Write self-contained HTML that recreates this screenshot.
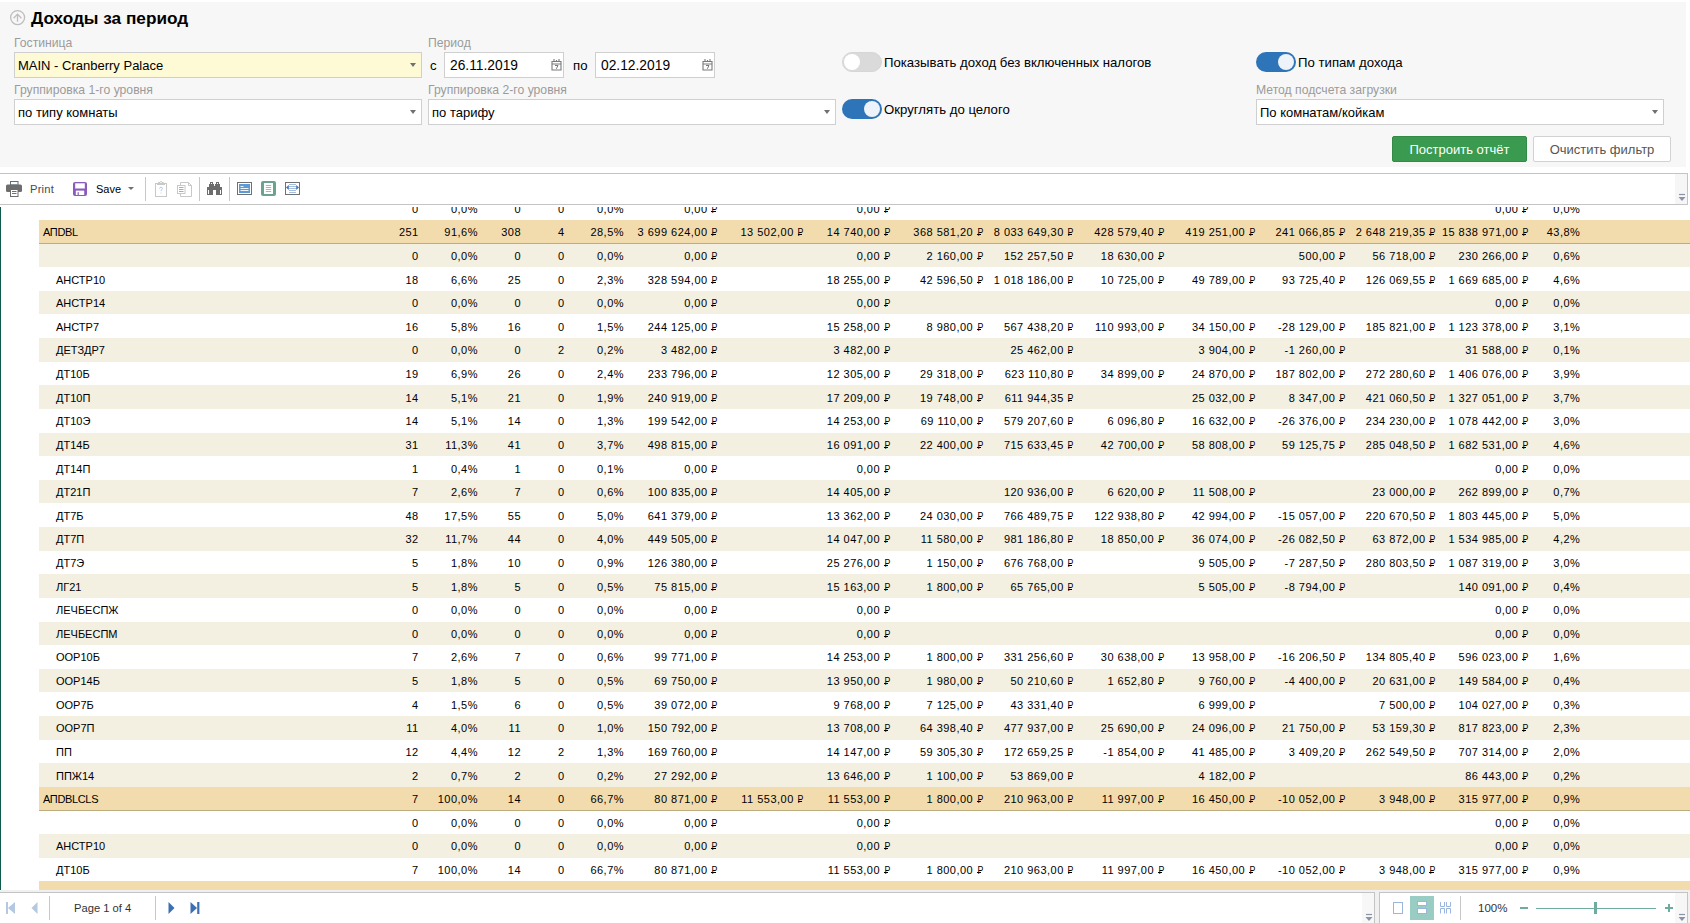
<!DOCTYPE html>
<html><head><meta charset="utf-8">
<style>
*{box-sizing:border-box}
html,body{margin:0;padding:0}
body{width:1690px;height:923px;overflow:hidden;position:relative;background:#fff;font-family:"Liberation Sans",sans-serif;color:#000}
.a{position:absolute}
#panel{position:absolute;left:0;top:2px;width:1686px;height:165px;background:#f7f7f7}
.lbl{position:absolute;font-size:12.2px;color:#9b9b9b;line-height:14px;white-space:nowrap}
.inp{position:absolute;height:26px;border:1px solid #cfcfcf;background:#fff;font-size:13px;line-height:26px;padding-left:3px;white-space:nowrap}
.arr{position:absolute;right:5px;top:10px;width:0;height:0;border-left:3px solid transparent;border-right:3px solid transparent;border-top:4px solid #707070}
.tg{position:absolute;width:40px;height:20px;border-radius:10px}
.tg.off{background:#dadada;border:1px solid #d6d6d6}
.tg.on{background:#2e74b8}
.tg .k{position:absolute;top:2px;width:16px;height:16px;border-radius:50%}
.tg.off .k{left:1px;top:1px;background:#fff}
.tg.on .k{left:22px;background:#eef3f9}
.tl{position:absolute;font-size:13.2px;line-height:16px;white-space:nowrap;margin-top:1px}
.btn{position:absolute;height:26px;font-size:13px;line-height:26px;text-align:center;border-radius:2px;white-space:nowrap}
#tb{position:absolute;left:0;top:173px;width:1688px;height:32px;border-top:1px solid #c4c4c4;border-bottom:1px solid #c4c4c4;border-right:1px solid #c4c4c4;background:#fff}
.sep{position:absolute;top:4px;width:1px;height:24px;background:#c8c8c8}
#tbl{position:absolute;left:0;top:207px;width:1690px;height:683px;overflow:hidden}
.tr{position:absolute;left:39px;right:0;font-size:11px;letter-spacing:0.48px;white-space:nowrap}
.tr s{position:absolute;text-decoration:none;top:0;line-height:24px}
.tr s.n{letter-spacing:0;top:0}
.o1 s{margin-top:1px}
.om1 s{margin-top:-1px}
.g{background:#f2dcae;border-bottom:1px solid #bcad80}
.b{background:#f3efe1}
.w{background:#fff}
.r{display:inline-block;position:relative;width:6.5px;margin-left:-1px;letter-spacing:0;font-weight:normal}
.r::before{content:"Р";display:inline-block;transform:scaleX(.8);transform-origin:100% 50%}
.r::after{content:"";position:absolute;left:1.2px;width:4.3px;top:14px;height:1px;background:#000}
#sb{position:absolute;left:0;top:890px;width:1690px;height:33px;background:#f0f0f0}
</style></head><body>
<div id="panel"></div>
<!-- title -->
<svg class="a" style="left:9px;top:9px" width="18" height="18" viewBox="0 0 18 18"><circle cx="8.6" cy="8.6" r="7" fill="none" stroke="#bdbdbd" stroke-width="1.3"/><path d="M8.5 12.8V4.8M4.6 9.2L8.5 5.1L12.4 9.2" fill="none" stroke="#bdbdbd" stroke-width="1.3"/></svg>
<div class="a" style="left:31px;top:8px;font-size:17.2px;font-weight:bold;line-height:20px;white-space:nowrap">Доходы за период</div>

<div class="lbl" style="left:14px;top:36px">Гостиница</div>
<div class="inp" style="left:14px;top:52px;width:408px;background:#fffad6">MAIN - Cranberry Palace<i class="arr"></i></div>
<div class="lbl" style="left:14px;top:83px">Группировка 1-го уровня</div>
<div class="inp" style="left:14px;top:99px;width:408px">по типу комнаты<i class="arr"></i></div>

<div class="lbl" style="left:428px;top:36px">Период</div>
<div class="tl" style="left:430px;top:57px">с</div>
<div class="inp" style="left:444px;top:52px;width:120px;padding-left:5px;font-size:13.8px;line-height:26px">26.11.2019<svg class="a" style="left:106px;top:5px" width="11" height="13" viewBox="0 0 11 13"><path d="M1 3.5H10V12H1Z M1 6H10" fill="none" stroke="#7a7a7a" stroke-width="1.1"/><path d="M3 1V4M8 1V4M5.5 2V4" stroke="#7a7a7a" stroke-width="1.1"/><path d="M4 7.5H7L5.3 10.8" fill="none" stroke="#7a7a7a" stroke-width="1"/></svg></div>
<div class="tl" style="left:573px;top:57px">по</div>
<div class="inp" style="left:595px;top:52px;width:120px;padding-left:5px;font-size:13.8px;line-height:26px">02.12.2019<svg class="a" style="left:106px;top:5px" width="11" height="13" viewBox="0 0 11 13"><path d="M1 3.5H10V12H1Z M1 6H10" fill="none" stroke="#7a7a7a" stroke-width="1.1"/><path d="M3 1V4M8 1V4M5.5 2V4" stroke="#7a7a7a" stroke-width="1.1"/><path d="M4 7.5H7L5.3 10.8" fill="none" stroke="#7a7a7a" stroke-width="1"/></svg></div>
<div class="lbl" style="left:428px;top:83px">Группировка 2-го уровня</div>
<div class="inp" style="left:428px;top:99px;width:408px">по тарифу<i class="arr"></i></div>

<div class="tg off" style="left:842px;top:52px"><i class="k"></i></div>
<div class="tl" style="left:884px;top:54px">Показывать доход без включенных налогов</div>
<div class="tg on" style="left:842px;top:99px"><i class="k"></i></div>
<div class="tl" style="left:884px;top:101px">Округлять до целого</div>

<div class="tg on" style="left:1256px;top:52px"><i class="k"></i></div>
<div class="tl" style="left:1298px;top:54px">По типам дохода</div>
<div class="lbl" style="left:1256px;top:83px">Метод подсчета загрузки</div>
<div class="inp" style="left:1256px;top:99px;width:408px">По комнатам/койкам<i class="arr"></i></div>

<div class="btn" style="left:1392px;top:136px;width:135px;background:#3a9a4f;border:1px solid #338a47;color:#fff">Построить отчёт</div>
<div class="btn" style="left:1533px;top:136px;width:138px;background:#fff;border:1px solid #d2d2d2;color:#555">Очистить фильтр</div>

<!-- toolbar -->
<div id="tb">
<svg class="a" style="left:5px;top:6px" width="18" height="17" viewBox="0 0 18 17"><rect x="5.5" y="1.5" width="7.5" height="5" fill="#fff" stroke="#6d6d6d"/><line x1="6" y1="5" x2="12.5" y2="5" stroke="#3b7ac4"/><rect x="1" y="4.5" width="16" height="7.5" rx="1.5" fill="#6d6d6d"/><rect x="5.5" y="9.5" width="7.5" height="7" fill="#fff" stroke="#6d6d6d"/><line x1="7" y1="11.5" x2="11.5" y2="11.5" stroke="#3b7ac4"/><line x1="7" y1="13.5" x2="11.5" y2="13.5" stroke="#3b7ac4"/></svg>
<div class="a" style="left:30px;top:9px;font-size:11.2px;line-height:13px;color:#4a4a4a;letter-spacing:0.2px">Print</div>
<svg class="a" style="left:73px;top:8px" width="14" height="14" viewBox="0 0 14 14"><rect x="0" y="0" width="14" height="14" rx="2" fill="#8a5bbd"/><rect x="2.2" y="1.3" width="9.6" height="5.2" fill="#fff"/><rect x="2.8" y="8.6" width="8.4" height="4.4" fill="#fff"/><rect x="4.6" y="10.2" width="1.2" height="3" fill="#8a5bbd"/></svg>
<div class="a" style="left:96px;top:9px;font-size:11px;line-height:13px;color:#000">Save</div>
<i class="a" style="left:128px;top:13px;width:0;height:0;border-left:3px solid transparent;border-right:3px solid transparent;border-top:3px solid #707070"></i>
<i class="sep" style="left:145px;top:3px"></i>
<svg class="a" style="left:155px;top:6px" width="13" height="18" viewBox="0 0 13 18"><rect x="0.5" y="3.5" width="11" height="13" fill="#fff" stroke="#c8c8c8"/><path d="M3.5 3.5V2.5H5A1 1 0 0 1 7 2.5H8.5V3.5" fill="none" stroke="#c8c8c8"/><rect x="2" y="3" width="8" height="2" fill="#c8c8c8"/><path d="M4.6 8.6Q4.6 7.2 6 7.2Q7.4 7.2 7.4 8.5Q7.4 9.4 6.1 10.2V11.2M6 12.6V13.4" fill="none" stroke="#a9c4e8" stroke-width="0.9"/></svg>
<svg class="a" style="left:177px;top:8px" width="16" height="16" viewBox="0 0 16 16"><path d="M3.5 0.5H11.5L14.5 3.5V14.5H3.5Z" fill="#fff" stroke="#c8c8c8"/><path d="M11.5 0.5V3.5H14.5" fill="none" stroke="#c8c8c8"/><rect x="0.5" y="3.5" width="7.5" height="8" fill="#fff" stroke="#c8c8c8"/><path d="M2 5.5H6.5M2 7.5H6.5M2 9.5H6.5" stroke="#8fb3e0"/></svg>
<i class="sep" style="left:199px;top:3px"></i>
<svg class="a" style="left:207px;top:8px" width="15" height="13" viewBox="0 0 15 13" shape-rendering="crispEdges"><g fill="#6d6d6d"><rect x="3" y="0" width="3" height="2"/><rect x="2" y="2" width="5" height="3"/><rect x="0" y="5" width="6" height="8"/><rect x="9" y="0" width="3" height="2"/><rect x="8" y="2" width="5" height="3"/><rect x="9" y="5" width="6" height="8"/><rect x="6" y="4" width="3" height="4"/></g><g fill="#fff"><rect x="1" y="8" width="1" height="4"/><rect x="13" y="8" width="1" height="4"/><rect x="4" y="1" width="1" height="1"/><rect x="10" y="1" width="1" height="1"/></g></svg>
<i class="sep" style="left:229px;top:3px"></i>
<svg class="a" style="left:237px;top:8px" width="15" height="13" viewBox="0 0 15 13"><rect x="0.5" y="0.5" width="14" height="12" fill="#fff" stroke="#707070"/><rect x="2" y="2" width="11" height="9" fill="#5b9bd8"/><line x1="3.5" y1="4.5" x2="6.5" y2="4.5" stroke="#fff" stroke-width="0.9"/><line x1="3.5" y1="6.5" x2="11.5" y2="6.5" stroke="#fff" stroke-width="0.9"/><line x1="3.5" y1="8.5" x2="11.5" y2="8.5" stroke="#fff" stroke-width="0.9"/></svg>
<svg class="a" style="left:261px;top:7px" width="15" height="15" viewBox="0 0 15 15"><rect x="0" y="0" width="15" height="15" rx="2" fill="#6ba38f"/><rect x="3" y="2" width="9" height="11" fill="#fff"/><line x1="4.8" y1="4.5" x2="10.2" y2="4.5" stroke="#8eadd6" stroke-width="0.9"/><line x1="4.8" y1="6.5" x2="10.2" y2="6.5" stroke="#8eadd6" stroke-width="0.9"/><line x1="4.8" y1="8.5" x2="10.2" y2="8.5" stroke="#8eadd6" stroke-width="0.9"/><line x1="4.8" y1="10.5" x2="10.2" y2="10.5" stroke="#8eadd6" stroke-width="0.9"/></svg>
<svg class="a" style="left:285px;top:8px" width="15" height="13" viewBox="0 0 15 13"><rect x="0.5" y="0.5" width="14" height="12" fill="#fff" stroke="#707070"/><line x1="4" y1="2.5" x2="11" y2="2.5" stroke="#8eadd6" stroke-width="0.8"/><line x1="4" y1="4.5" x2="11" y2="4.5" stroke="#8eadd6" stroke-width="0.8"/><line x1="4" y1="6.5" x2="11" y2="6.5" stroke="#8eadd6" stroke-width="0.8"/><line x1="4" y1="8.5" x2="11" y2="8.5" stroke="#8eadd6" stroke-width="0.8"/><line x1="4" y1="10.5" x2="11" y2="10.5" stroke="#8eadd6" stroke-width="0.8"/><path d="M1 5.5L3.8 3V8Z M14 5.5L11.2 3V8Z" fill="#3d75bd"/></svg>
<div class="a" style="left:1675px;top:0;width:12px;height:30px;background:#f6f6f6"></div>
<svg class="a" style="left:1678px;top:19px" width="8" height="9" viewBox="0 0 8 9"><line x1="1" y1="1.5" x2="7" y2="1.5" stroke="#8a94a6" stroke-width="1.2"/><path d="M0.5 4H7.5L4 8Z" fill="#8a94a6"/></svg>
</div>

<div id="tbl">
<i class="a" style="left:0;top:0;width:1px;height:683px;background:#0f5a4f"></i>
<div style="position:absolute;left:0;top:-207px;width:1690px;height:1100px">
<div class="tr w o1" style="top:196px;height:24px"><s style="right:1271.3px">0</s><s style="right:1212.1px">0,0%</s><s style="right:1169.0px">0</s><s style="right:1125.4px">0</s><s style="right:1066.0px">0,0%</s><s style="right:973.4px">0,00 <b class=r></b></s><s style="right:800.9px">0,00 <b class=r></b></s><s style="right:162.5px">0,00 <b class=r></b></s><s style="right:109.7px">0,0%</s></div>
<div class="tr g" style="top:220px;height:24px"><s class=n style="left:4px;letter-spacing:-0.35px">АПDBL</s><s style="right:1271.3px">251</s><s style="right:1212.1px">91,6%</s><s style="right:1169.0px">308</s><s style="right:1125.4px">4</s><s style="right:1066.0px">28,5%</s><s style="right:973.4px">3 699 624,00 <b class=r></b></s><s style="right:887.2px">13 502,00 <b class=r></b></s><s style="right:800.9px">14 740,00 <b class=r></b></s><s style="right:707.8px">368 581,20 <b class=r></b></s><s style="right:617.2px">8 033 649,30 <b class=r></b></s><s style="right:526.9px">428 579,40 <b class=r></b></s><s style="right:435.8px">419 251,00 <b class=r></b></s><s style="right:345.6px">241 066,85 <b class=r></b></s><s style="right:255.3px">2 648 219,35 <b class=r></b></s><s style="right:162.5px">15 838 971,00 <b class=r></b></s><s style="right:109.7px">43,8%</s></div>
<div class="tr b" style="top:244px;height:23px"><s style="right:1271.3px">0</s><s style="right:1212.1px">0,0%</s><s style="right:1169.0px">0</s><s style="right:1125.4px">0</s><s style="right:1066.0px">0,0%</s><s style="right:973.4px">0,00 <b class=r></b></s><s style="right:800.9px">0,00 <b class=r></b></s><s style="right:707.8px">2 160,00 <b class=r></b></s><s style="right:617.2px">152 257,50 <b class=r></b></s><s style="right:526.9px">18 630,00 <b class=r></b></s><s style="right:345.6px">500,00 <b class=r></b></s><s style="right:255.3px">56 718,00 <b class=r></b></s><s style="right:162.5px">230 266,00 <b class=r></b></s><s style="right:109.7px">0,6%</s></div>
<div class="tr w o1" style="top:267px;height:24px"><s class=n style="left:17px">АНСТР10</s><s style="right:1271.3px">18</s><s style="right:1212.1px">6,6%</s><s style="right:1169.0px">25</s><s style="right:1125.4px">0</s><s style="right:1066.0px">2,3%</s><s style="right:973.4px">328 594,00 <b class=r></b></s><s style="right:800.9px">18 255,00 <b class=r></b></s><s style="right:707.8px">42 596,50 <b class=r></b></s><s style="right:617.2px">1 018 186,00 <b class=r></b></s><s style="right:526.9px">10 725,00 <b class=r></b></s><s style="right:435.8px">49 789,00 <b class=r></b></s><s style="right:345.6px">93 725,40 <b class=r></b></s><s style="right:255.3px">126 069,55 <b class=r></b></s><s style="right:162.5px">1 669 685,00 <b class=r></b></s><s style="right:109.7px">4,6%</s></div>
<div class="tr b" style="top:291px;height:23px"><s class=n style="left:17px">АНСТР14</s><s style="right:1271.3px">0</s><s style="right:1212.1px">0,0%</s><s style="right:1169.0px">0</s><s style="right:1125.4px">0</s><s style="right:1066.0px">0,0%</s><s style="right:973.4px">0,00 <b class=r></b></s><s style="right:800.9px">0,00 <b class=r></b></s><s style="right:162.5px">0,00 <b class=r></b></s><s style="right:109.7px">0,0%</s></div>
<div class="tr w o1" style="top:314px;height:24px"><s class=n style="left:17px">АНСТР7</s><s style="right:1271.3px">16</s><s style="right:1212.1px">5,8%</s><s style="right:1169.0px">16</s><s style="right:1125.4px">0</s><s style="right:1066.0px">1,5%</s><s style="right:973.4px">244 125,00 <b class=r></b></s><s style="right:800.9px">15 258,00 <b class=r></b></s><s style="right:707.8px">8 980,00 <b class=r></b></s><s style="right:617.2px">567 438,20 <b class=r></b></s><s style="right:526.9px">110 993,00 <b class=r></b></s><s style="right:435.8px">34 150,00 <b class=r></b></s><s style="right:345.6px">-28 129,00 <b class=r></b></s><s style="right:255.3px">185 821,00 <b class=r></b></s><s style="right:162.5px">1 123 378,00 <b class=r></b></s><s style="right:109.7px">3,1%</s></div>
<div class="tr b" style="top:338px;height:24px"><s class=n style="left:17px">ДЕТЗДР7</s><s style="right:1271.3px">0</s><s style="right:1212.1px">0,0%</s><s style="right:1169.0px">0</s><s style="right:1125.4px">2</s><s style="right:1066.0px">0,2%</s><s style="right:973.4px">3 482,00 <b class=r></b></s><s style="right:800.9px">3 482,00 <b class=r></b></s><s style="right:617.2px">25 462,00 <b class=r></b></s><s style="right:435.8px">3 904,00 <b class=r></b></s><s style="right:345.6px">-1 260,00 <b class=r></b></s><s style="right:162.5px">31 588,00 <b class=r></b></s><s style="right:109.7px">0,1%</s></div>
<div class="tr w" style="top:362px;height:23px"><s class=n style="left:17px">ДТ10Б</s><s style="right:1271.3px">19</s><s style="right:1212.1px">6,9%</s><s style="right:1169.0px">26</s><s style="right:1125.4px">0</s><s style="right:1066.0px">2,4%</s><s style="right:973.4px">233 796,00 <b class=r></b></s><s style="right:800.9px">12 305,00 <b class=r></b></s><s style="right:707.8px">29 318,00 <b class=r></b></s><s style="right:617.2px">623 110,80 <b class=r></b></s><s style="right:526.9px">34 899,00 <b class=r></b></s><s style="right:435.8px">24 870,00 <b class=r></b></s><s style="right:345.6px">187 802,00 <b class=r></b></s><s style="right:255.3px">272 280,60 <b class=r></b></s><s style="right:162.5px">1 406 076,00 <b class=r></b></s><s style="right:109.7px">3,9%</s></div>
<div class="tr b o1" style="top:385px;height:24px"><s class=n style="left:17px">ДТ10П</s><s style="right:1271.3px">14</s><s style="right:1212.1px">5,1%</s><s style="right:1169.0px">21</s><s style="right:1125.4px">0</s><s style="right:1066.0px">1,9%</s><s style="right:973.4px">240 919,00 <b class=r></b></s><s style="right:800.9px">17 209,00 <b class=r></b></s><s style="right:707.8px">19 748,00 <b class=r></b></s><s style="right:617.2px">611 944,35 <b class=r></b></s><s style="right:435.8px">25 032,00 <b class=r></b></s><s style="right:345.6px">8 347,00 <b class=r></b></s><s style="right:255.3px">421 060,50 <b class=r></b></s><s style="right:162.5px">1 327 051,00 <b class=r></b></s><s style="right:109.7px">3,7%</s></div>
<div class="tr w" style="top:409px;height:24px"><s class=n style="left:17px">ДТ10Э</s><s style="right:1271.3px">14</s><s style="right:1212.1px">5,1%</s><s style="right:1169.0px">14</s><s style="right:1125.4px">0</s><s style="right:1066.0px">1,3%</s><s style="right:973.4px">199 542,00 <b class=r></b></s><s style="right:800.9px">14 253,00 <b class=r></b></s><s style="right:707.8px">69 110,00 <b class=r></b></s><s style="right:617.2px">579 207,60 <b class=r></b></s><s style="right:526.9px">6 096,80 <b class=r></b></s><s style="right:435.8px">16 632,00 <b class=r></b></s><s style="right:345.6px">-26 376,00 <b class=r></b></s><s style="right:255.3px">234 230,00 <b class=r></b></s><s style="right:162.5px">1 078 442,00 <b class=r></b></s><s style="right:109.7px">3,0%</s></div>
<div class="tr b" style="top:433px;height:23px"><s class=n style="left:17px">ДТ14Б</s><s style="right:1271.3px">31</s><s style="right:1212.1px">11,3%</s><s style="right:1169.0px">41</s><s style="right:1125.4px">0</s><s style="right:1066.0px">3,7%</s><s style="right:973.4px">498 815,00 <b class=r></b></s><s style="right:800.9px">16 091,00 <b class=r></b></s><s style="right:707.8px">22 400,00 <b class=r></b></s><s style="right:617.2px">715 633,45 <b class=r></b></s><s style="right:526.9px">42 700,00 <b class=r></b></s><s style="right:435.8px">58 808,00 <b class=r></b></s><s style="right:345.6px">59 125,75 <b class=r></b></s><s style="right:255.3px">285 048,50 <b class=r></b></s><s style="right:162.5px">1 682 531,00 <b class=r></b></s><s style="right:109.7px">4,6%</s></div>
<div class="tr w o1" style="top:456px;height:24px"><s class=n style="left:17px">ДТ14П</s><s style="right:1271.3px">1</s><s style="right:1212.1px">0,4%</s><s style="right:1169.0px">1</s><s style="right:1125.4px">0</s><s style="right:1066.0px">0,1%</s><s style="right:973.4px">0,00 <b class=r></b></s><s style="right:800.9px">0,00 <b class=r></b></s><s style="right:162.5px">0,00 <b class=r></b></s><s style="right:109.7px">0,0%</s></div>
<div class="tr b" style="top:480px;height:23px"><s class=n style="left:17px">ДТ21П</s><s style="right:1271.3px">7</s><s style="right:1212.1px">2,6%</s><s style="right:1169.0px">7</s><s style="right:1125.4px">0</s><s style="right:1066.0px">0,6%</s><s style="right:973.4px">100 835,00 <b class=r></b></s><s style="right:800.9px">14 405,00 <b class=r></b></s><s style="right:617.2px">120 936,00 <b class=r></b></s><s style="right:526.9px">6 620,00 <b class=r></b></s><s style="right:435.8px">11 508,00 <b class=r></b></s><s style="right:255.3px">23 000,00 <b class=r></b></s><s style="right:162.5px">262 899,00 <b class=r></b></s><s style="right:109.7px">0,7%</s></div>
<div class="tr w o1" style="top:503px;height:24px"><s class=n style="left:17px">ДТ7Б</s><s style="right:1271.3px">48</s><s style="right:1212.1px">17,5%</s><s style="right:1169.0px">55</s><s style="right:1125.4px">0</s><s style="right:1066.0px">5,0%</s><s style="right:973.4px">641 379,00 <b class=r></b></s><s style="right:800.9px">13 362,00 <b class=r></b></s><s style="right:707.8px">24 030,00 <b class=r></b></s><s style="right:617.2px">766 489,75 <b class=r></b></s><s style="right:526.9px">122 938,80 <b class=r></b></s><s style="right:435.8px">42 994,00 <b class=r></b></s><s style="right:345.6px">-15 057,00 <b class=r></b></s><s style="right:255.3px">220 670,50 <b class=r></b></s><s style="right:162.5px">1 803 445,00 <b class=r></b></s><s style="right:109.7px">5,0%</s></div>
<div class="tr b" style="top:527px;height:24px"><s class=n style="left:17px">ДТ7П</s><s style="right:1271.3px">32</s><s style="right:1212.1px">11,7%</s><s style="right:1169.0px">44</s><s style="right:1125.4px">0</s><s style="right:1066.0px">4,0%</s><s style="right:973.4px">449 505,00 <b class=r></b></s><s style="right:800.9px">14 047,00 <b class=r></b></s><s style="right:707.8px">11 580,00 <b class=r></b></s><s style="right:617.2px">981 186,80 <b class=r></b></s><s style="right:526.9px">18 850,00 <b class=r></b></s><s style="right:435.8px">36 074,00 <b class=r></b></s><s style="right:345.6px">-26 082,50 <b class=r></b></s><s style="right:255.3px">63 872,00 <b class=r></b></s><s style="right:162.5px">1 534 985,00 <b class=r></b></s><s style="right:109.7px">4,2%</s></div>
<div class="tr w" style="top:551px;height:23px"><s class=n style="left:17px">ДТ7Э</s><s style="right:1271.3px">5</s><s style="right:1212.1px">1,8%</s><s style="right:1169.0px">10</s><s style="right:1125.4px">0</s><s style="right:1066.0px">0,9%</s><s style="right:973.4px">126 380,00 <b class=r></b></s><s style="right:800.9px">25 276,00 <b class=r></b></s><s style="right:707.8px">1 150,00 <b class=r></b></s><s style="right:617.2px">676 768,00 <b class=r></b></s><s style="right:435.8px">9 505,00 <b class=r></b></s><s style="right:345.6px">-7 287,50 <b class=r></b></s><s style="right:255.3px">280 803,50 <b class=r></b></s><s style="right:162.5px">1 087 319,00 <b class=r></b></s><s style="right:109.7px">3,0%</s></div>
<div class="tr b o1" style="top:574px;height:24px"><s class=n style="left:17px">ЛГ21</s><s style="right:1271.3px">5</s><s style="right:1212.1px">1,8%</s><s style="right:1169.0px">5</s><s style="right:1125.4px">0</s><s style="right:1066.0px">0,5%</s><s style="right:973.4px">75 815,00 <b class=r></b></s><s style="right:800.9px">15 163,00 <b class=r></b></s><s style="right:707.8px">1 800,00 <b class=r></b></s><s style="right:617.2px">65 765,00 <b class=r></b></s><s style="right:435.8px">5 505,00 <b class=r></b></s><s style="right:345.6px">-8 794,00 <b class=r></b></s><s style="right:162.5px">140 091,00 <b class=r></b></s><s style="right:109.7px">0,4%</s></div>
<div class="tr w" style="top:598px;height:24px"><s class=n style="left:17px">ЛЕЧБЕСПЖ</s><s style="right:1271.3px">0</s><s style="right:1212.1px">0,0%</s><s style="right:1169.0px">0</s><s style="right:1125.4px">0</s><s style="right:1066.0px">0,0%</s><s style="right:973.4px">0,00 <b class=r></b></s><s style="right:800.9px">0,00 <b class=r></b></s><s style="right:162.5px">0,00 <b class=r></b></s><s style="right:109.7px">0,0%</s></div>
<div class="tr b" style="top:622px;height:23px"><s class=n style="left:17px">ЛЕЧБЕСПМ</s><s style="right:1271.3px">0</s><s style="right:1212.1px">0,0%</s><s style="right:1169.0px">0</s><s style="right:1125.4px">0</s><s style="right:1066.0px">0,0%</s><s style="right:973.4px">0,00 <b class=r></b></s><s style="right:800.9px">0,00 <b class=r></b></s><s style="right:162.5px">0,00 <b class=r></b></s><s style="right:109.7px">0,0%</s></div>
<div class="tr w" style="top:645px;height:24px"><s class=n style="left:17px">ООР10Б</s><s style="right:1271.3px">7</s><s style="right:1212.1px">2,6%</s><s style="right:1169.0px">7</s><s style="right:1125.4px">0</s><s style="right:1066.0px">0,6%</s><s style="right:973.4px">99 771,00 <b class=r></b></s><s style="right:800.9px">14 253,00 <b class=r></b></s><s style="right:707.8px">1 800,00 <b class=r></b></s><s style="right:617.2px">331 256,60 <b class=r></b></s><s style="right:526.9px">30 638,00 <b class=r></b></s><s style="right:435.8px">13 958,00 <b class=r></b></s><s style="right:345.6px">-16 206,50 <b class=r></b></s><s style="right:255.3px">134 805,40 <b class=r></b></s><s style="right:162.5px">596 023,00 <b class=r></b></s><s style="right:109.7px">1,6%</s></div>
<div class="tr b" style="top:669px;height:23px"><s class=n style="left:17px">ООР14Б</s><s style="right:1271.3px">5</s><s style="right:1212.1px">1,8%</s><s style="right:1169.0px">5</s><s style="right:1125.4px">0</s><s style="right:1066.0px">0,5%</s><s style="right:973.4px">69 750,00 <b class=r></b></s><s style="right:800.9px">13 950,00 <b class=r></b></s><s style="right:707.8px">1 980,00 <b class=r></b></s><s style="right:617.2px">50 210,60 <b class=r></b></s><s style="right:526.9px">1 652,80 <b class=r></b></s><s style="right:435.8px">9 760,00 <b class=r></b></s><s style="right:345.6px">-4 400,00 <b class=r></b></s><s style="right:255.3px">20 631,00 <b class=r></b></s><s style="right:162.5px">149 584,00 <b class=r></b></s><s style="right:109.7px">0,4%</s></div>
<div class="tr w o1" style="top:692px;height:24px"><s class=n style="left:17px">ООР7Б</s><s style="right:1271.3px">4</s><s style="right:1212.1px">1,5%</s><s style="right:1169.0px">6</s><s style="right:1125.4px">0</s><s style="right:1066.0px">0,5%</s><s style="right:973.4px">39 072,00 <b class=r></b></s><s style="right:800.9px">9 768,00 <b class=r></b></s><s style="right:707.8px">7 125,00 <b class=r></b></s><s style="right:617.2px">43 331,40 <b class=r></b></s><s style="right:435.8px">6 999,00 <b class=r></b></s><s style="right:255.3px">7 500,00 <b class=r></b></s><s style="right:162.5px">104 027,00 <b class=r></b></s><s style="right:109.7px">0,3%</s></div>
<div class="tr b" style="top:716px;height:24px"><s class=n style="left:17px">ООР7П</s><s style="right:1271.3px">11</s><s style="right:1212.1px">4,0%</s><s style="right:1169.0px">11</s><s style="right:1125.4px">0</s><s style="right:1066.0px">1,0%</s><s style="right:973.4px">150 792,00 <b class=r></b></s><s style="right:800.9px">13 708,00 <b class=r></b></s><s style="right:707.8px">64 398,40 <b class=r></b></s><s style="right:617.2px">477 937,00 <b class=r></b></s><s style="right:526.9px">25 690,00 <b class=r></b></s><s style="right:435.8px">24 096,00 <b class=r></b></s><s style="right:345.6px">21 750,00 <b class=r></b></s><s style="right:255.3px">53 159,30 <b class=r></b></s><s style="right:162.5px">817 823,00 <b class=r></b></s><s style="right:109.7px">2,3%</s></div>
<div class="tr w" style="top:740px;height:23px"><s class=n style="left:17px">ПП</s><s style="right:1271.3px">12</s><s style="right:1212.1px">4,4%</s><s style="right:1169.0px">12</s><s style="right:1125.4px">2</s><s style="right:1066.0px">1,3%</s><s style="right:973.4px">169 760,00 <b class=r></b></s><s style="right:800.9px">14 147,00 <b class=r></b></s><s style="right:707.8px">59 305,30 <b class=r></b></s><s style="right:617.2px">172 659,25 <b class=r></b></s><s style="right:526.9px">-1 854,00 <b class=r></b></s><s style="right:435.8px">41 485,00 <b class=r></b></s><s style="right:345.6px">3 409,20 <b class=r></b></s><s style="right:255.3px">262 549,50 <b class=r></b></s><s style="right:162.5px">707 314,00 <b class=r></b></s><s style="right:109.7px">2,0%</s></div>
<div class="tr b o1" style="top:763px;height:24px"><s class=n style="left:17px">ППЖ14</s><s style="right:1271.3px">2</s><s style="right:1212.1px">0,7%</s><s style="right:1169.0px">2</s><s style="right:1125.4px">0</s><s style="right:1066.0px">0,2%</s><s style="right:973.4px">27 292,00 <b class=r></b></s><s style="right:800.9px">13 646,00 <b class=r></b></s><s style="right:707.8px">1 100,00 <b class=r></b></s><s style="right:617.2px">53 869,00 <b class=r></b></s><s style="right:435.8px">4 182,00 <b class=r></b></s><s style="right:162.5px">86 443,00 <b class=r></b></s><s style="right:109.7px">0,2%</s></div>
<div class="tr g" style="top:787px;height:24px"><s class=n style="left:4px;letter-spacing:-0.35px">АПDBLCLS</s><s style="right:1271.3px">7</s><s style="right:1212.1px">100,0%</s><s style="right:1169.0px">14</s><s style="right:1125.4px">0</s><s style="right:1066.0px">66,7%</s><s style="right:973.4px">80 871,00 <b class=r></b></s><s style="right:887.2px">11 553,00 <b class=r></b></s><s style="right:800.9px">11 553,00 <b class=r></b></s><s style="right:707.8px">1 800,00 <b class=r></b></s><s style="right:617.2px">210 963,00 <b class=r></b></s><s style="right:526.9px">11 997,00 <b class=r></b></s><s style="right:435.8px">16 450,00 <b class=r></b></s><s style="right:345.6px">-10 052,00 <b class=r></b></s><s style="right:255.3px">3 948,00 <b class=r></b></s><s style="right:162.5px">315 977,00 <b class=r></b></s><s style="right:109.7px">0,9%</s></div>
<div class="tr w" style="top:811px;height:23px"><s style="right:1271.3px">0</s><s style="right:1212.1px">0,0%</s><s style="right:1169.0px">0</s><s style="right:1125.4px">0</s><s style="right:1066.0px">0,0%</s><s style="right:973.4px">0,00 <b class=r></b></s><s style="right:800.9px">0,00 <b class=r></b></s><s style="right:162.5px">0,00 <b class=r></b></s><s style="right:109.7px">0,0%</s></div>
<div class="tr b" style="top:834px;height:24px"><s class=n style="left:17px">АНСТР10</s><s style="right:1271.3px">0</s><s style="right:1212.1px">0,0%</s><s style="right:1169.0px">0</s><s style="right:1125.4px">0</s><s style="right:1066.0px">0,0%</s><s style="right:973.4px">0,00 <b class=r></b></s><s style="right:800.9px">0,00 <b class=r></b></s><s style="right:162.5px">0,00 <b class=r></b></s><s style="right:109.7px">0,0%</s></div>
<div class="tr w" style="top:858px;height:23px"><s class=n style="left:17px">ДТ10Б</s><s style="right:1271.3px">7</s><s style="right:1212.1px">100,0%</s><s style="right:1169.0px">14</s><s style="right:1125.4px">0</s><s style="right:1066.0px">66,7%</s><s style="right:973.4px">80 871,00 <b class=r></b></s><s style="right:800.9px">11 553,00 <b class=r></b></s><s style="right:707.8px">1 800,00 <b class=r></b></s><s style="right:617.2px">210 963,00 <b class=r></b></s><s style="right:526.9px">11 997,00 <b class=r></b></s><s style="right:435.8px">16 450,00 <b class=r></b></s><s style="right:345.6px">-10 052,00 <b class=r></b></s><s style="right:255.3px">3 948,00 <b class=r></b></s><s style="right:162.5px">315 977,00 <b class=r></b></s><s style="right:109.7px">0,9%</s></div>
<div class="tr g o1" style="top:881px;height:24px"></div>
</div>
</div>

<div id="sb">
<div class="a" style="left:0;top:2px;width:1375px;height:31px;background:#fff;border-top:1px solid #c4c4c4;border-right:1px solid #c4c4c4">
<svg class="a" style="left:5px;top:9px" width="11" height="13" viewBox="0 0 11 13"><rect x="1" y="0" width="2" height="12" fill="#b4c8e2"/><path d="M10 0V12L3 6Z" fill="#b4c8e2"/></svg>
<svg class="a" style="left:31px;top:9px" width="8" height="13" viewBox="0 0 8 13"><path d="M6.5 0V12L0.5 6Z" fill="#b4c8e2"/></svg>
<i class="a" style="left:49px;top:3px;width:1px;height:24px;background:#c8c8c8"></i>
<div class="a" style="left:74px;top:8px;font-size:11.2px;line-height:14px;color:#333">Page 1 of 4</div>
<i class="a" style="left:155px;top:3px;width:1px;height:24px;background:#c8c8c8"></i>
<svg class="a" style="left:168px;top:9px" width="8" height="13" viewBox="0 0 8 13"><path d="M0.5 0V12L6.5 6Z" fill="#3b71b3"/></svg>
<svg class="a" style="left:190px;top:9px" width="11" height="13" viewBox="0 0 11 13"><path d="M0.5 0V12L7 6Z" fill="#3b71b3"/><rect x="7.2" y="0" width="2.2" height="12" fill="#3b71b3"/></svg>
<div class="a" style="left:1362px;top:0;width:12px;height:30px;background:#f7f7f7"></div>
<svg class="a" style="left:1365px;top:20px" width="8" height="9" viewBox="0 0 8 9"><line x1="1" y1="1.5" x2="7" y2="1.5" stroke="#8a94a6" stroke-width="1.2"/><path d="M0.5 4H7.5L4 8Z" fill="#8a94a6"/></svg>
</div>
<div class="a" style="left:1379px;top:2px;width:309px;height:31px;background:#fff;border-top:1px solid #c4c4c4;border-left:1px solid #c4c4c4;border-right:1px solid #c4c4c4">
<i class="a" style="left:13px;top:9px;width:10px;height:12px;border:1px solid #9ab5de"></i>
<i class="a" style="left:30px;top:3px;width:24px;height:24px;background:#99ccc2"></i>
<i class="a" style="left:37px;top:8px;width:10px;height:5px;background:#fff;border:1px solid #9ab5de"></i>
<i class="a" style="left:37px;top:15px;width:10px;height:6px;background:#fff;border:1px solid #9ab5de"></i>
<svg class="a" style="left:60px;top:9px" width="12" height="12" viewBox="0 0 12 12"><path d="M0.5 0V4.5H4.5V0M6.5 0V4.5H10.5V0M0.5 11.5V6.5H4.5V11.5M6.5 11.5V6.5H10.5V11.5" fill="none" stroke="#9ab5de" stroke-width="1"/></svg>
<i class="a" style="left:80px;top:3px;width:1px;height:24px;background:#c8c8c8"></i>
<div class="a" style="left:98px;top:8px;font-size:11.5px;line-height:14px;color:#333">100%</div>
<i class="a" style="left:140px;top:14px;width:8px;height:2px;background:#6eac9f"></i>
<i class="a" style="left:156px;top:14.5px;width:120px;height:1px;background:#6eac9f"></i>
<i class="a" style="left:214px;top:9px;width:3px;height:12px;background:#6eac9f"></i>
<i class="a" style="left:285px;top:14px;width:8px;height:2px;background:#6eac9f"></i>
<i class="a" style="left:288px;top:11px;width:2px;height:8px;background:#6eac9f"></i>
<div class="a" style="left:295px;top:0;width:12px;height:30px;background:#f7f7f7"></div>
<svg class="a" style="left:298px;top:20px" width="8" height="9" viewBox="0 0 8 9"><line x1="1" y1="1.5" x2="7" y2="1.5" stroke="#8a94a6" stroke-width="1.2"/><path d="M0.5 4H7.5L4 8Z" fill="#8a94a6"/></svg>
</div>
</div>
</body></html>
